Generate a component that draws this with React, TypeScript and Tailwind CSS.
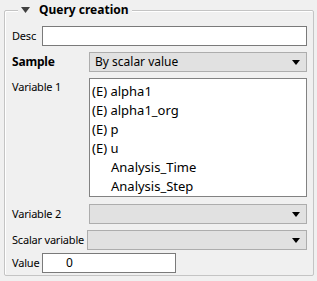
import { ReactNode } from 'react'

const font = { fontFamily: '"Noto Sans", "Open Sans", sans-serif' }

function Arrow() {
  return (
    <svg width="8" height="5" viewBox="0 0 8 5" className="shrink-0">
      <path d="M0 0 H8 L4 5 Z" fill="#000" />
    </svg>
  )
}

function Combo({ text, width }: { text?: string; width: string }) {
  return (
    <div className={`${width} h-[20px] flex items-center justify-between border border-[#adadad] bg-[#e1e1e1] pl-[5px] pr-[6px] text-[12px] text-black`}>
      <span>{text}</span>
      <Arrow />
    </div>
  )
}

function Row({ label, labelW, bold, children, className = '' }: { label: string; labelW: string; bold?: boolean; children: ReactNode; className?: string }) {
  return (
    <div className={`flex items-center ${className}`}>
      <div className={`${labelW} shrink-0 whitespace-nowrap tracking-[-0.2px] ${bold ? 'text-[12px] font-bold' : 'text-[11px]'} text-black`}>{label}</div>
      {children}
    </div>
  )
}

export default function App() {
  const vars = [
    { label: '(E) alpha1', pad: false },
    { label: '(E) alpha1_org', pad: false },
    { label: '(E) p', pad: false },
    { label: '(E) u', pad: false },
    { label: 'Analysis_Time', pad: true },
    { label: 'Analysis_Step', pad: true },
  ]

  return (
    <div className="w-[317px] h-[281px] bg-[#f0f0f0] pt-[10px] pl-[4px]" style={font}>
      <div className="relative w-[310px] h-[266px] border border-[#c4c4c4] rounded-[2px] shadow-[inset_1px_1px_0_#fff]">
        {/* Title over the frame */}
        <div className="absolute left-[13px] -top-[9px] flex items-center gap-[9px] bg-[#f0f0f0] pl-[3px] pr-[3px]">
          <svg width="9" height="6" viewBox="0 0 9 6">
            <path d="M0 0 H9 L4.5 6 Z" fill="#404040" />
          </svg>
          <span className="text-[12px] font-bold text-black leading-[16px]">Query creation</span>
        </div>

        <div className="flex flex-col pl-[7px] pt-[15px]">
          <Row label="Desc" labelW="w-[30px]">
            <div className="w-[265px] h-[20px] border border-[#7a7a7a] bg-white" />
          </Row>

          <Row label="Sample" labelW="w-[77px]" bold className="mt-[6px]">
            <Combo text="By scalar value" width="w-[218px]" />
          </Row>

          <div className="flex items-start mt-[6px]">
            <div className="w-[77px] shrink-0 whitespace-nowrap tracking-[-0.2px] text-[11px] text-black pt-[1px]">Variable 1</div>
            <div className="w-[218px] h-[119px] border border-[#828282] bg-white pt-[3px] pl-[2px] text-[13px] text-black">
              {vars.map((v) => (
                <div key={v.label} className={`h-[19px] leading-[19px] ${v.pad ? 'pl-[19px]' : ''}`}>
                  {v.label}
                </div>
              ))}
            </div>
          </div>

          <Row label="Variable 2" labelW="w-[77px]" className="mt-[7px]">
            <Combo width="w-[218px]" />
          </Row>

          <Row label="Scalar variable" labelW="w-[75px]" className="mt-[6px]">
            <Combo width="w-[220px]" />
          </Row>

          <Row label="Value" labelW="w-[30px]" className="mt-[3px]">
            <div className="w-[134px] h-[20px] border border-[#7a7a7a] bg-white pl-[23px] text-[12px] leading-[18px] text-black">0</div>
          </Row>
        </div>
      </div>
    </div>
  )
}
